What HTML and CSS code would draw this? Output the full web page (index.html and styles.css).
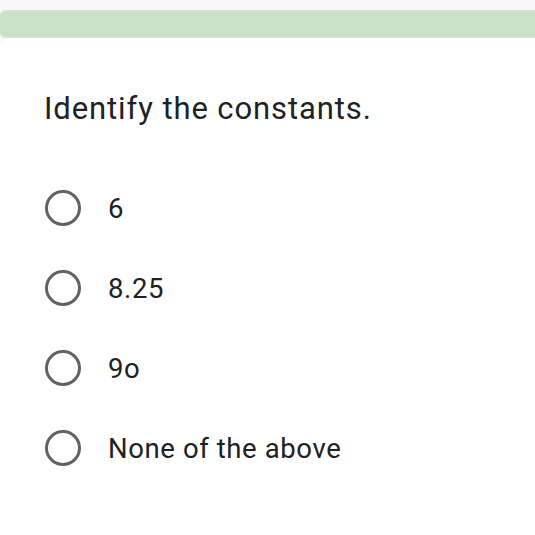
FILE: index.html
```html
<!DOCTYPE html>
<html>
<head>
<meta charset="utf-8">
<link rel="stylesheet" href="styles.css">
</head>
<body>
<div class="page">
  <div class="prev-card"></div>
  <div class="card">
    <h1 class="question">Identify the constants.</h1>
    <div class="options">
      <div class="option"><span class="radio"></span><span class="label">6</span></div>
      <div class="option"><span class="radio"></span><span class="label">8.25</span></div>
      <div class="option"><span class="radio"></span><span class="label">9o</span></div>
      <div class="option"><span class="radio"></span><span class="label">None of the above</span></div>
    </div>
  </div>
</div>
</body>
</html>
```
FILE: styles.css
```css
html, body {
  margin: 0;
  padding: 0;
  background: #ffffff;
}
.page {
  width: 535px;
  height: 535px;
  overflow: hidden;
  background: #f8f9f8;
  padding-top: 10px;
  box-sizing: border-box;
  font-family: Roboto, "Liberation Sans", sans-serif;
}
.prev-card {
  height: 24px;
  background: #c8e2c7;
  border-top: 2px solid #d9ddd8;
  border-bottom: 2px solid #d9ddd8;
  border-radius: 6px 0 0 6px;
}
.card {
  background: #ffffff;
  border-radius: 8px 0 0 0;
  height: 520px;
  padding: 53px 0 0 44px;
  box-sizing: border-box;
}
.question {
  margin: 0;
  font-size: 31px;
  font-weight: 400;
  letter-spacing: 0.9px;
  color: #202124;
  line-height: 36px;
}
.options {
  display: flex;
  flex-direction: column;
  gap: 42px;
  margin-top: 62px;
}
.option {
  display: flex;
  align-items: center;
  height: 38px;
}
.radio {
  width: 30px;
  height: 30px;
  border: 3.5px solid #5f6368;
  border-radius: 50%;
  flex: none;
  margin-left: 1px;
}
.label {
  margin-left: 27px;
  font-size: 27.5px;
  letter-spacing: 0.6px;
  color: #202124;
}
```
